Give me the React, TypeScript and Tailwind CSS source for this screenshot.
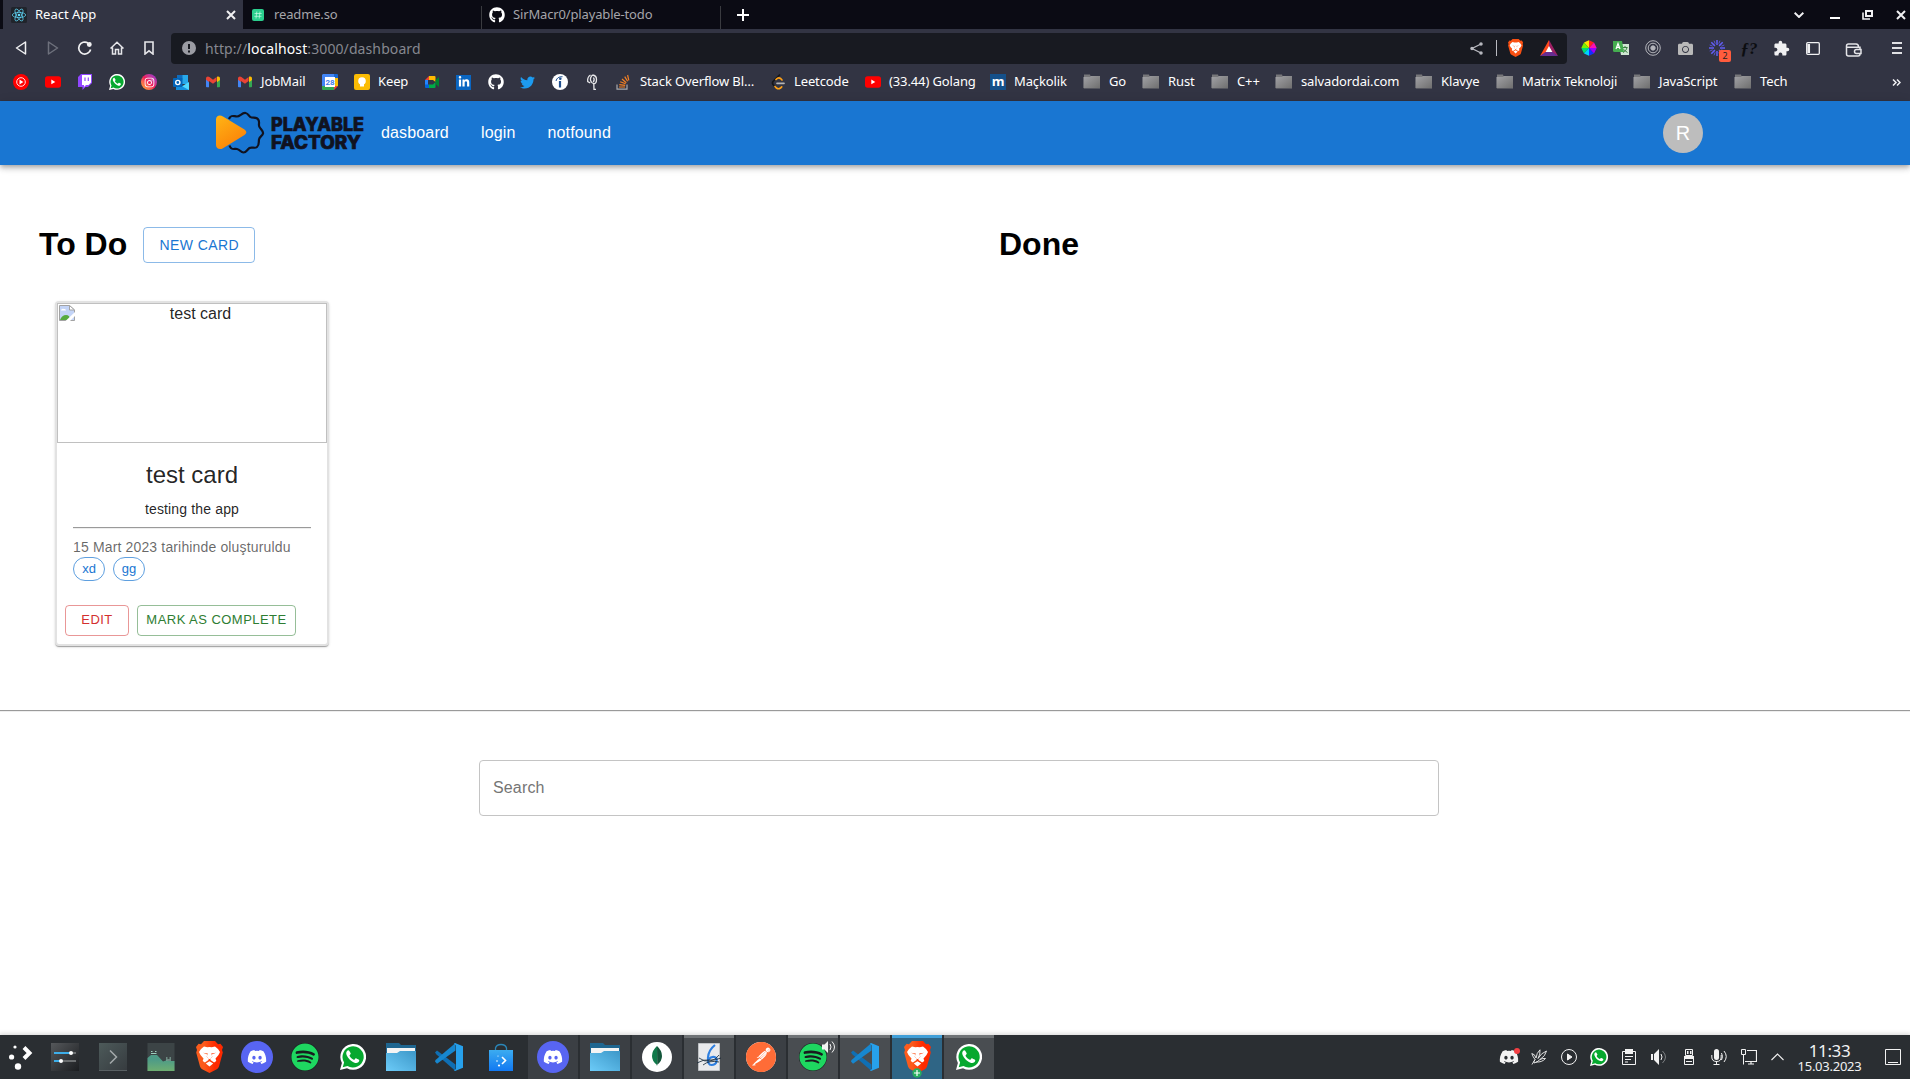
import React from "react";
import {
  FaGithub,
  FaTwitter,
  FaWhatsapp,
  FaDiscord,
  FaSpotify,
  FaInstagram,
  FaLinkedinIn,
  FaCamera,
} from "react-icons/fa";
import { MdExtension } from "react-icons/md";
import { SiPostman } from "react-icons/si";

type Size = { s?: number };

function BraveLion({ s = 32, flat = false }: { s?: number; flat?: boolean }) {
  return (
    <svg width={(s * 27) / 32} height={s} viewBox="0 0 27 32">
      <defs>
        <linearGradient id="brave-fill" x1="0" x2="1" y1="0" y2="0">
          <stop offset="0.3" stopColor="#fb5b1c" />
          <stop offset="0.7" stopColor="#ff2a00" />
        </linearGradient>
      </defs>
      <path
        d="M8 0h11l3 3.200 2.400-.4L27 6l-1 3 .8 2.600L23 25.400c-.4 1.300-1.200 2-2.200 2.800L13.500 32 6.200 28.200C5.200 27.400 4.400 26.700 4 25.400L.2 11.600 1 9 0 6l2.600-3.200 2.400.4z"
        fill={flat ? "#f95012" : "url(#brave-fill)"}
      />
      <path
        d="M8 5.500l3.300.8L13.500 6l2.200.3L19 5.500l3 2.500 2 3-1.500 3-3 3.500.8 2.500-2.200 1.500L14.500 19l-.2-1.500 2-1.800-.6-2.200 4.300-1.800-4.500.8L13.500 12l-2 .5L7 11.700l4.300 1.800-.6 2.200 2 1.800-.2 1.500-3.600 2.500L6.700 20l.8-2.500-3-3.500L3 11l2-3z"
        fill="#fff"
      />
      <path d="M12 11.500h3l1.200 4-2 2.500h-1.400l-2-2.500z" fill="#fff" />
      <path d="M13.500 20.200l3.700 2.200-3.700 3.200-3.700-3.200z" fill="#fff" />
    </svg>
  );
}

function WhatsApp({ s = 26 }: Size) {
  return (
    <svg width={s} height={s} viewBox="0 0 26 26">
      <path d="M0 26l1.900-6.900A12.900 12.900 0 1 1 7 24.200z" fill="#fff" />
      <path d="M2.700 23.300l1.400-4.800A10.600 10.600 0 1 1 7.500 21.900z" fill="#06a82f" />
      <path
        d="M9.200 6.800c-.5-1-1.500-.6-2.200.2-1.300 1.600-1 3.600.8 6.200 2 2.900 4.200 4.800 7.300 5.700 2 .6 4-.6 4.200-2.300.1-.8-.1-.9-2.900-2.200-.7-.3-1 .2-1.900 1.300-.4.500-4.600-2-5-4.200 1.800-1.800 1.200-2 .9-2.700z"
        fill="#fff"
      />
    </svg>
  );
}

function VsCode({ s = 28 }: Size) {
  return (
    <svg width={s} height={s} viewBox="0 0 28 28">
      <path d="M0 9.500l2-2L20.500 21.500V28L1.500 11.500z" fill="#0f6fb4" />
      <path d="M0 18.500l2 2.200L20.500 7.500V0L.5 17z" fill="#1787cf" />
      <path d="M20 0l8 3.200v21.600L20 28l-1-.5 2-1.500V2.500L19 .6z" fill="#27a1ec" />
    </svg>
  );
}

function DolphinFolder() {
  return (
    <svg width="30" height="28" viewBox="0 0 30 28">
      <defs>
        <linearGradient id="dolphin" x1="0" x2="1" y1="1" y2="0">
          <stop offset="0" stopColor="#6ccbf8" />
          <stop offset="1" stopColor="#3c97c8" />
        </linearGradient>
      </defs>
      <path d="M0 0h13l2 2h15v10H0z" fill="#1f6690" />
      <path d="M1 5h28v7H1z" fill="#f4f4f4" />
      <path d="M0 10h11l3-2h16v20H0z" fill="url(#dolphin)" />
    </svg>
  );
}

function DiscordDisc() {
  return (
    <span className="flex size-8 items-center justify-center rounded-full bg-[#5865f2] text-white">
      <FaDiscord size={20} />
    </span>
  );
}

function SpotifyDisc() {
  return (
    <span className="flex size-7 items-center justify-center rounded-full bg-[#191c1f] text-[#1ed760]">
      <FaSpotify size={28} />
    </span>
  );
}

function YouTube() {
  return (
    <svg width="16" height="12" viewBox="0 0 16 12">
      <rect width="16" height="11.500" y=".2" rx="2.600" fill="#f00" />
      <path d="M6.300 3.500v4.800l4-2.400z" fill="#fff" />
    </svg>
  );
}

function Gmail() {
  return (
    <svg width="16" height="12" viewBox="0 0 16 12">
      <path d="M1 2v8.500q0 .8.800.8H4V5z" fill="#4285f4" />
      <path d="M15 2v8.500q0 .8-.8.800H12V5z" fill="#34a853" />
      <path d="M1 2.500C1 .6 3-.1 4.400 1L8 3.700 11.600 1V5L8 7.800 4 5v1L1 3.800z" fill="#ea4335" />
      <path d="M12 .8C13.500-.1 15 .7 15 2.500V4l-3 2.300z" fill="#fbbc04" />
    </svg>
  );
}

function BookmarkFolder() {
  return (
    <svg width="18" height="16" viewBox="0 0 18 16">
      <defs>
        <linearGradient id="bm-folder" x1="0" x2="1" y1="0" y2="1">
          <stop offset="0" stopColor="#a2a2a6" />
          <stop offset="1" stopColor="#6f6f6f" />
        </linearGradient>
      </defs>
      <path d="M1 .5h6l.5 1.500H17v12.500H.800z" fill="#77777a" />
      <path d="M.5 3h6.500l1-1h9v12H.5z" fill="url(#bm-folder)" />
    </svg>
  );
}

function ReactLogo() {
  return (
    <svg width="16" height="16" viewBox="0 0 16 16">
      <rect width="16" height="16" rx="1.500" fill="#20242b" />
      <g fill="none" stroke="#61dafb" strokeWidth=".7">
        <ellipse cx="8" cy="8" rx="6.700" ry="2.600" />
        <ellipse cx="8" cy="8" rx="6.700" ry="2.600" transform="rotate(60 8 8)" />
        <ellipse cx="8" cy="8" rx="6.700" ry="2.600" transform="rotate(120 8 8)" />
      </g>
      <circle cx="8" cy="8" r="1.300" fill="#61dafb" />
    </svg>
  );
}

function CloseX() {
  return (
    <svg width="10" height="10" viewBox="0 0 10 10" stroke="#f0f0f2" strokeWidth="2">
      <path d="M1 1l8 8M9 1L1 9" />
    </svg>
  );
}

function TabStrip() {
  return (
    <div className="flex h-[29px] bg-[#0b0b14] pl-[3px] text-[13px] text-[#a5a5aa]">
      <div className="flex w-[240px] items-center bg-[#323443] pr-[7px] pl-2 text-white">
        <ReactLogo />
        <span className="ml-2 flex-1 whitespace-nowrap">React App</span>
        <CloseX />
      </div>
      <div className="flex w-[238px] items-center pl-[9px]">
        <svg width="12" height="12" viewBox="0 0 12 12">
          <rect width="12" height="12" rx="2" fill="#2bcf8e" />
          <path d="M4.800 2.500L4 9.500M8 2.500l-.8 7M2.500 4.500h7.200M2.300 7.300h7.200" stroke="#c9fbe6" strokeWidth=".7" />
        </svg>
        <span className="ml-[10px] tracking-[-0.15px] whitespace-nowrap">readme.so</span>
      </div>
      <div className="mt-1.5 w-px bg-[#3a3b40]" />
      <div className="flex w-[238px] items-center pl-[7px]">
        <FaGithub size={16} className="text-white" />
        <span className="ml-2 tracking-[-0.15px] whitespace-nowrap">SirMacr0/playable-todo</span>
      </div>
      <div className="mt-1.5 w-px bg-[#3a3b40]" />
      <div className="flex w-[44px] items-center justify-center">
        <svg width="12" height="12" viewBox="0 0 12 12" stroke="#fff" strokeWidth="2">
          <path d="M6 0v12M0 6h12" />
        </svg>
      </div>
      <div className="ml-auto flex items-center pr-1">
        <svg width="10" height="6" viewBox="0 0 10 6" fill="none" stroke="#f0f0f2" strokeWidth="2" className="mr-[26px]">
          <path d="M.6.800L5 5 9.400.800" />
        </svg>
        <span className="mt-[7px] mr-[22px] h-0.5 w-[10px] bg-white" />
        <svg width="11" height="10" viewBox="0 0 11 10" fill="none" stroke="#f0f0f2" strokeWidth="2" className="mr-[23px]">
          <path d="M4 1h6v5H4z" />
          <path d="M1 2.500V9h7" strokeWidth="1.600" />
        </svg>
        <CloseX />
      </div>
    </div>
  );
}

function NavCell({ children }: { children: React.ReactNode }) {
  return <span className="relative flex w-8 shrink-0 items-center justify-center pb-px">{children}</span>;
}

function Toolbar() {
  return (
    <div className="flex h-[35px] bg-[#323443] pt-1 pl-[5px]">
      <NavCell>
        <svg width="12" height="14" viewBox="0 0 12 14" fill="none" stroke="#f0f0f2" strokeWidth="1.500" strokeLinejoin="round">
          <path d="M10.500 1v12L1.500 7z" />
        </svg>
      </NavCell>
      <NavCell>
        <svg width="12" height="14" viewBox="0 0 12 14" fill="none" stroke="#6e707c" strokeWidth="1.500" strokeLinejoin="round">
          <path d="M1.500 1v12l9-6z" />
        </svg>
      </NavCell>
      <NavCell>
        <svg width="16" height="16" viewBox="0 0 16 16" fill="none" stroke="#f0f0f2" strokeWidth="1.700">
          <path d="M11 3A6 6 0 1 0 13.600 9.500" />
          <circle cx="12.300" cy="4.500" r="1.600" fill="#f0f0f2" />
        </svg>
      </NavCell>
      <NavCell>
        <svg width="14" height="14" viewBox="0 0 14 14" fill="none" stroke="#e6e6ea" strokeWidth="1.500">
          <path d="M.5 7.500L7 1.200l6.500 6.300M2.500 6.500V13H5.500V8.500h3V13h3V6.500" />
        </svg>
      </NavCell>
      <NavCell>
        <svg width="10" height="14" viewBox="0 0 10 14" fill="none" stroke="#e6e6ea" strokeWidth="1.600">
          <path d="M1 1h8v12L5 9.800 1 13z" />
        </svg>
      </NavCell>
      <div className="ml-[6px] flex h-[31px] w-[1396px] items-center rounded bg-[#181a21] pb-px pl-[11px]">
        <svg width="14" height="14" viewBox="0 0 14 14">
          <circle cx="7" cy="7" r="7" fill="#9b9ca3" />
          <path d="M7 3v5M7 9.500v2" stroke="#181a21" strokeWidth="2" />
        </svg>
        <span className="ml-[9px] flex-1 text-[14px] tracking-[0.1px] whitespace-nowrap text-[#868890]">
          http://<span className="text-white">localhost</span>:3000/dashboard
        </span>
        <svg width="13" height="13" viewBox="0 0 13 13" stroke="#b9bac0" strokeWidth="1.300" fill="#b9bac0" className="mr-[13px]">
          <path d="M11 2L2 6.500l9 4.500" fill="none" />
          <circle cx="11" cy="2" r="1.100" />
          <circle cx="2" cy="6.500" r="1.100" />
          <circle cx="11" cy="11" r="1.100" />
        </svg>
        <span className="mr-[11px] h-4 w-px bg-[#b9bac0]" />
        <BraveLion s={18} flat />
        <svg width="18" height="16" viewBox="0 0 18 16" className="mr-[9px] ml-[17px]">
          <path d="M9 0L0 16l9-5z" fill="#ff4a1c" />
          <path d="M9 0l9 16-9-5z" fill="#9e1f63" />
          <path d="M0 16h18l-5.500-4h-7z" fill="#662d91" />
          <path d="M9 6l3.400 6H5.600z" fill="#fff" />
        </svg>
      </div>
      <div className="ml-[6px] flex h-[31px]">
        <NavCell>
          <svg width="16" height="16" viewBox="0 0 16 16">
            <path d="M8 8V.3L3 2.500z" fill="#ffe100" />
            <path d="M8 8V.3l5 2.200z" fill="#ff2020" />
            <path d="M8 8L3 2.500.3 8z" fill="#7df000" />
            <path d="M8 8H.3L3 13.500z" fill="#00e070" />
            <path d="M8 8l-5 5.500 5 2.200z" fill="#00d0ff" />
            <path d="M8 8v7.700l5-2.200z" fill="#1030ff" />
            <path d="M8 8l5 5.500L15.700 8z" fill="#9a00ff" />
            <path d="M8 8h7.700L13 2.500z" fill="#ff10b0" />
          </svg>
        </NavCell>
        <NavCell>
          <svg width="16" height="16" viewBox="0 0 16 16">
            <path d="M6 4h10v11H8z" fill="#cfe6d2" />
            <path d="M9.500 7.500h5M12 6v1.500M14 7.500c-.5 2.500-2 4-4 5M10.500 9.500l4 3" stroke="#3c7f43" fill="none" />
            <path d="M0 1h9l2 11H1.500Q0 12 0 10.500z" fill="#45ad50" />
            <path d="M3 9l2-5.500L7 9M3.700 7.300h2.600" stroke="#fff" strokeWidth="1.200" fill="none" />
          </svg>
        </NavCell>
        <NavCell>
          <svg width="16" height="16" viewBox="0 0 16 16" fill="none" stroke="#b4b5bb">
            <circle cx="8" cy="8" r="7.300" />
            <circle cx="8" cy="8" r="4.800" />
            <circle cx="8" cy="8" r="2.200" fill="#b4b5bb" />
          </svg>
        </NavCell>
        <NavCell>
          <FaCamera size={15} className="text-[#b9b9b9]" />
        </NavCell>
        <NavCell>
          <svg width="16" height="16" viewBox="0 0 16 16" stroke="#625df5" strokeWidth="1.500">
            <path d="M8 0v5M8 11v5M0 8h5M11 8h5M2.300 2.300l3.600 3.600M10.100 10.100l3.600 3.600M13.700 2.300l-3.600 3.600M5.900 10.100l-3.600 3.600" />
            <path d="M5 .7l1.200 3M9.800 12.300l1.200 3M15.300 5l-3 1.200M3.700 9.800l-3 1.200M11 .7l-1.200 3M6.200 12.300l-1.200 3M.7 5l3 1.200M12.300 9.800l3 1.200" strokeWidth=".8" />
          </svg>
          <span className="absolute top-[17px] left-[18px] flex h-3 w-3 items-center justify-center rounded-[2px] bg-[#ff5c3d] text-[9px] text-[#222]">
            2
          </span>
        </NavCell>
        <NavCell>
          <span className="font-[Liberation_Serif] text-[17px] leading-none font-bold text-[#0c0d11] italic">ƒ?</span>
        </NavCell>
        <NavCell>
          <MdExtension size={17} className="text-[#f0f0f2]" />
        </NavCell>
        <NavCell>
          <svg width="14" height="13" viewBox="0 0 14 13" fill="none" stroke="#f0f0f2" strokeWidth="1.300">
            <rect x=".7" y=".7" width="12.600" height="11.600" rx="1" />
            <path d="M2.700 2v9" strokeWidth="2.700" />
          </svg>
        </NavCell>
        <span className="flex w-12 items-center justify-center">
          <svg width="17" height="14" viewBox="0 0 17 14" fill="none" stroke="#e4e4e8" strokeWidth="1.500" className="mt-0.5">
            <path d="M15 6.500V4.200H1.500V11q0 2 2 2H13q2 0 2-2v-.5M1.500 5V3q0-2 2-2H11q2.500 0 2.500 3" />
            <path d="M16 6.500h-4.500q-2 0-2 2t2 2H16z" />
          </svg>
        </span>
        <span className="ml-[15px] flex flex-col justify-center gap-[3px] pb-px">
          <span className="h-0.5 w-[10px] bg-[#e0e0e4]" />
          <span className="h-0.5 w-[10px] bg-[#e0e0e4]" />
          <span className="h-0.5 w-[10px] bg-[#e0e0e4]" />
        </span>
      </div>
    </div>
  );
}

type Mark = { icon: React.ReactNode; label?: string; width?: string };

const marks: Mark[] = [
  {
    icon: (
      <svg width="16" height="16" viewBox="0 0 16 16">
        <circle cx="8" cy="8" r="8" fill="#f00" />
        <circle cx="8" cy="8" r="4.300" fill="none" stroke="#fff" strokeWidth=".9" />
        <path d="M6.500 5.600v4.800L10.400 8z" fill="#fff" />
      </svg>
    ),
  },
  { icon: <YouTube /> },
  {
    icon: (
      <svg width="16" height="16" viewBox="0 0 16 16">
        <path d="M4 0h11v9l-4 4H8.500L5.500 16v-3H1V3z" fill="#9146ff" />
        <path d="M5 1h9v7.500L11.500 11H9l-2 2v-2H5z" fill="#fff" />
        <path d="M8 3.500v3.500M11.300 3.500v3.500" stroke="#9146ff" strokeWidth="1.200" />
      </svg>
    ),
  },
  { icon: <WhatsApp s={16} /> },
  {
    icon: (
      <span className="flex size-4 items-center justify-center rounded-full bg-linear-to-tr from-[#ffb400] via-[#f0185c] to-[#8a1be0] text-white">
        <FaInstagram size={11} />
      </span>
    ),
  },
  {
    icon: (
      <svg width="16" height="16" viewBox="0 0 16 16">
        <path d="M4 1h11v9H4z" fill="#28a8ea" />
        <path d="M4 1h5.500v4.500H4z" fill="#0f6cbd" />
        <path d="M3 8l6.500 4L16 8v8H3z" fill="#50d9ff" />
        <path d="M3 9l13 7H3z" fill="#1490df" />
        <rect y="4" width="9.500" height="9" rx="1" fill="#0364b8" />
        <circle cx="4.800" cy="8.500" r="2.100" fill="none" stroke="#fff" strokeWidth="1.400" />
      </svg>
    ),
  },
  { icon: <Gmail /> },
  { icon: <Gmail />, label: "JobMail", width: "w-[45px]" },
  {
    icon: (
      <svg width="16" height="16" viewBox="0 0 16 16">
        <path d="M1 0h11v4H0V1z" fill="#4285f4" />
        <path d="M0 3h4v9H0z" fill="#4285f4" />
        <path d="M12 0h3q1 0 1 1v3h-4z" fill="#1967d2" />
        <path d="M12 4h4v8h-4z" fill="#fbbc04" />
        <path d="M0 12h12v4H1q-1 0-1-1z" fill="#34a853" />
        <path d="M12 12h4l-4 4z" fill="#ea4335" />
        <path d="M3 3h10v10H3z" fill="#fff" />
        <text x="8" y="11" fontSize="8" fontWeight="700" textAnchor="middle" fill="#3f7de8" fontFamily="Roboto, sans-serif">
          28
        </text>
      </svg>
    ),
  },
  {
    icon: (
      <svg width="16" height="16" viewBox="0 0 16 16">
        <rect width="16" height="16" rx="2" fill="#fbbc04" />
        <circle cx="8" cy="7" r="3.800" fill="#fff" />
        <path d="M6 9h4v3.500H6z" fill="#fff" />
      </svg>
    ),
    label: "Keep",
    width: "w-[30px]",
  },
  {
    icon: (
      <svg width="16" height="16" viewBox="0 0 16 16">
        <path d="M1 6l4-4v4z" fill="#ea4335" />
        <path d="M1 6h3v5H1z" fill="#2684fc" />
        <path d="M1 10.500h4V14H2q-1 0-1-1z" fill="#0066da" />
        <path d="M5 2h5.500q1 0 1 1v5L9 6H5z" fill="#ffba00" />
        <path d="M5 10.500h4L11.500 8v5q0 1-1 1H5z" fill="#00ac47" />
        <path d="M11.500 6L15 3v10l-3.500-3z" fill="#00832d" />
      </svg>
    ),
  },
  {
    icon: (
      <span className="mr-px flex size-[15px] items-center justify-center bg-[#0a66c2] text-white">
        <FaLinkedinIn size={12} />
      </span>
    ),
  },
  { icon: <FaGithub size={16} className="text-white" /> },
  { icon: <FaTwitter size={15} className="mr-px text-[#1d9bf0]" /> },
  {
    icon: (
      <svg width="16" height="16" viewBox="0 0 16 16">
        <circle cx="8" cy="8" r="8" fill="#fff" />
        <path d="M8 7v6.500" stroke="#1f4f8f" strokeWidth="2.200" />
        <circle cx="8.300" cy="4.800" r="1.300" fill="#1f4f8f" />
        <path d="M4 7Q5 2.500 10.500 2.700" fill="none" stroke="#1f4f8f" />
      </svg>
    ),
  },
  {
    icon: (
      <svg width="16" height="16" viewBox="0 0 16 16" fill="none" stroke="#e8e8ea" strokeWidth="1.300">
        <path d="M6.500 1Q3.200 3 3.700 7.500L6.300 9M8.500 1Q5.500 4 6.800 7T10.500 9.500M8.500 1Q12.500 1.500 12.500 5.500T9.800 10L10 15.300h2M9.500 3.500q1.500 2.500-.3 4.500" />
      </svg>
    ),
  },
  {
    icon: (
      <svg width="16" height="16" viewBox="0 0 16 16" fill="none">
        <path d="M1 10.500v4.700h10v-4.700" stroke="#a9aaae" strokeWidth="1.200" />
        <path d="M3 13h6M3.300 10.600l5.900.8M4.200 7.800l5.400 2M6 5l4.300 3.700M8.700 2.600l2.900 4.700M11.600 1l1.200 5.300" stroke="#f48024" strokeWidth="1.200" />
      </svg>
    ),
    label: "Stack Overflow Bl…",
    width: "w-[114px]",
  },
  {
    icon: (
      <svg width="16" height="16" viewBox="0 0 16 16" fill="none" strokeWidth="1.700" strokeLinecap="round">
        <path d="M9.500 1L3 7.500Q2 9 3 10.500L5 12.500" stroke="#15161a" />
        <path d="M5 12.500L6.500 14Q8.500 15.500 10.500 14L11.700 12.800M6 5.500Q8.500 2.800 10.500 4.500L12 6" stroke="#ffa116" />
        <path d="M7 9.300h7" stroke="#b3b3b3" />
      </svg>
    ),
    label: "Leetcode",
    width: "w-[55px]",
  },
  { icon: <YouTube />, label: "(33.44) Golang", width: "w-[85px]" },
  {
    icon: (
      <span className="flex size-4 items-center justify-center bg-[#14508a] pb-0.5 font-[Open_Sans] text-[13px] leading-none font-bold text-white">
        m
      </span>
    ),
    label: "Maçkolik",
    width: "w-[53px]",
  },
  { icon: <BookmarkFolder />, label: "Go", width: "w-[17px]" },
  { icon: <BookmarkFolder />, label: "Rust", width: "w-[27px]" },
  { icon: <BookmarkFolder />, label: "C++", width: "w-[22px]" },
  { icon: <BookmarkFolder />, label: "salvadordai.com", width: "w-[98px]" },
  { icon: <BookmarkFolder />, label: "Klavye", width: "w-[39px]" },
  { icon: <BookmarkFolder />, label: "Matrix Teknoloji", width: "w-[95px]" },
  { icon: <BookmarkFolder />, label: "JavaScript", width: "w-[59px]" },
  { icon: <BookmarkFolder />, label: "Tech", width: "w-[27px]" },
];

function BookmarksBar() {
  return (
    <div className="flex h-[37px] items-center gap-4 bg-[#323443] pr-[9px] pb-px pl-[13px] text-[13px] tracking-[-0.12px] text-white">
      {marks.map((m, i) => (
        <span key={i} className="flex h-5 shrink-0 items-center gap-2">
          {m.icon}
          {m.label && <span className={`${m.width} whitespace-nowrap`}>{m.label}</span>}
        </span>
      ))}
      <svg width="9" height="7" viewBox="0 0 9 7" fill="none" stroke="#f0f0f2" strokeWidth="1.500" className="ml-auto">
        <path d="M1 .5l3 3-3 3M5 .5l3 3-3 3" />
      </svg>
    </div>
  );
}

function PlayableLogo() {
  return (
    <svg width="150" height="44" viewBox="0 0 150 44">
      <defs>
        <linearGradient id="play" x1="0" x2=".6" y1="0" y2="1">
          <stop offset="0" stopColor="#ffb515" />
          <stop offset="1" stopColor="#fb8208" />
        </linearGradient>
      </defs>
      <path
        d="M13 8C15 3 18 5.500 21 5.500S26 1.500 29.500 2s3 4 6 4.500 5.500-.5 7 2.500-.5 4.500 1 7 4 4 3.500 6.500-3.500 3-4 6 .5 5.500-2 7.500-5-.5-7.500 1-3 4.500-6 4.500-3.500-3-6.500-3.500-6 1.500-7.500-3.500"
        fill="none"
        stroke="#10121f"
        strokeWidth="2.200"
      />
      <path
        d="M0 8.500C0 4.500 4 3.500 7 5.500L28.500 18.500C31 20.500 31 22 28.500 24L7 37.200C4 39 0 38 0 34z"
        fill="url(#play)"
      />
      <g fill="#10121f" stroke="#10121f" strokeWidth=".7" fontFamily="Inter, sans-serif" fontWeight="800" fontSize="18.300">
        <text x="55" y="19.900" textLength="93" lengthAdjust="spacingAndGlyphs">
          PLAYABLE
        </text>
        <text x="55" y="37.700" textLength="90" lengthAdjust="spacingAndGlyphs">
          FACTORY
        </text>
      </g>
    </svg>
  );
}

function AppBar() {
  return (
    <header className="relative flex h-16 items-center bg-[#1976d2] pr-[207px] pl-[216px] text-base text-white shadow-[0_2px_4px_-1px_rgba(0,0,0,0.2),0_4px_5px_0_rgba(0,0,0,0.14),0_1px_10px_0_rgba(0,0,0,0.12)]">
      <PlayableLogo />
      <nav className="ml-[15px] flex gap-8 tracking-[0.15px]">
        <a>dasboard</a>
        <a>login</a>
        <a>notfound</a>
      </nav>
      <span className="ml-auto flex size-10 items-center justify-center rounded-full bg-[#bdbdbd] text-xl leading-none">R</span>
    </header>
  );
}

function BrokenImage() {
  return (
    <svg width="16" height="16" viewBox="0 0 16 16">
      <path d="M.5.500h10L15.500 5v10.500H.5z" fill="#c3d4f7" stroke="#a3a3a3" />
      <path d="M10.500.5V5h5z" fill="#fff" stroke="#a3a3a3" />
      <path d="M2 5q1.500-2 3-1 2-.5 2 1.500H2z" fill="#fff" />
      <path d="M1 15q2-5 6-5t4 5z" fill="#57ab40" />
      <path d="M6.500 16L16 7v4l-5 5z" fill="#fff" />
    </svg>
  );
}

function TodoCard() {
  return (
    <article className="w-[274px] rounded border-2 border-[#e2e2e2] bg-white text-black/87 shadow-[0_2px_1px_-1px_rgba(0,0,0,0.2),0_1px_1px_0_rgba(0,0,0,0.14),0_1px_3px_0_rgba(0,0,0,0.12)]">
      <div className="flex h-[140px] items-start border border-[#c0c0c0] pt-px pl-px">
        <BrokenImage />
        <span className="-mt-px flex-1 text-center text-base leading-[19px]">test card</span>
      </div>
      <div className="px-4 pt-4 pb-4">
        <h5 className="text-center text-2xl leading-8">test card</h5>
        <p className="mt-2 text-center text-sm tracking-[0.15px]">testing the app</p>
        <hr className="my-2 h-0.5 border-t border-b border-t-[#9a9a9a] border-b-[#eeeeee]" />
        <p className="text-sm tracking-[0.15px] text-black/60">15 Mart 2023 tarihinde oluşturuldu</p>
        <div className="flex gap-2 text-[13px] text-[#1976d2]">
          <span className="flex h-6 w-8 items-center justify-center rounded-full border border-[#1976d2]/70">xd</span>
          <span className="flex h-6 w-8 items-center justify-center rounded-full border border-[#1976d2]/70">gg</span>
        </div>
      </div>
      <div className="flex gap-2 p-2 text-[13px] tracking-[0.46px]">
        <button className="h-[31px] w-16 rounded border border-[#d32f2f]/50 pb-0.5 text-[#d32f2f]">EDIT</button>
        <button className="h-[31px] w-[159px] rounded border border-[#2e7d32]/50 pb-0.5 whitespace-nowrap text-[#2e7d32]">
          MARK AS COMPLETE
        </button>
      </div>
    </article>
  );
}

function Dashboard() {
  return (
    <main className="h-[870px] overflow-hidden bg-white">
      <div className="grid h-[545px] grid-cols-[960px_1fr] pt-[60px] pl-[39px]">
        <section>
          <div className="flex h-10 items-center gap-4">
            <h1 className="pb-0.5 text-[32px] leading-[38px] font-bold text-black">To Do</h1>
            <button className="h-9 w-28 rounded border border-[#1976d2]/50 text-sm tracking-[0.4px] text-[#1976d2]">NEW CARD</button>
          </div>
          <div className="mt-9 ml-4">
            <TodoCard />
          </div>
        </section>
        <section>
          <h1 className="text-[32px] leading-[38px] font-bold text-black">Done</h1>
        </section>
      </div>
      <hr className="h-0.5 border-t border-b border-t-[#9a9a9a] border-b-[#eeeeee]" />
      <div className="mt-12 ml-[479px] flex h-14 w-[960px] items-center rounded border border-[#c4c4c4] px-[13px] text-base tracking-[0.15px] text-[#757575]">
        Search
      </div>
    </main>
  );
}

function Launcher({ children }: { children: React.ReactNode }) {
  return <span className="flex w-12 shrink-0 items-center justify-center">{children}</span>;
}

const taskTone = {
  idle: "border-[#3b3f44] bg-[#3b3f44]",
  open: "border-[#6f7376] bg-[#494d51]",
  active: "border-[#419fd8] bg-[#2f6585]",
};

function Task({ tone, children }: { tone: keyof typeof taskTone; children: React.ReactNode }) {
  return (
    <span className={`relative flex w-[50px] items-center justify-center border-t-[3px] pb-[3px] ${taskTone[tone]}`}>
      {children}
    </span>
  );
}

function Tray() {
  const cell = "flex w-[30px] items-center justify-center";
  return (
    <div className="ml-auto flex text-[#f2f2f2]">
      <span className={`relative ${cell}`}>
        <FaDiscord size={20} />
        <span className="absolute top-[13px] right-1 size-1.5 rounded-full bg-[#f23f43]" />
      </span>
      <span className={cell}>
        <svg width="16" height="16" viewBox="0 0 16 16" fill="none" stroke="currentColor" strokeWidth=".9">
          <path d="M1 15.500l3-5M4 10.500Q2 8 .8 4.500 4 5 5 9 5.500 4 9 .8 9.500 5 7 9.500 10 4 15.500 2 14.500 7 9 10.500 12 9 14.500 9.500 11 13.500 5 13M4 10.500q-1.500 2-1 3.500 3-.5 6-3.500" />
        </svg>
      </span>
      <span className={cell}>
        <svg width="16" height="16" viewBox="0 0 16 16" fill="none" stroke="currentColor">
          <circle cx="8" cy="8" r="7.500" />
          <path d="M6.500 5v6L11 8z" fill="currentColor" />
        </svg>
      </span>
      <span className={cell}>
        <WhatsApp s={18} />
      </span>
      <span className={cell}>
        <svg width="14" height="16" viewBox="0 0 14 16" fill="none" stroke="currentColor">
          <path d="M.5 2.500h13v13H.5zM3 7.500h8M3 10.500h6M3 13h3" />
          <path d="M3 0h8v5H3z" fill="currentColor" stroke="none" />
        </svg>
      </span>
      <span className={cell}>
        <svg width="16" height="16" viewBox="0 0 16 16" fill="none" stroke="currentColor">
          <path d="M0 5h2v6H0zM3 5l5-5v16l-5-5z" fill="currentColor" stroke="none" />
          <path d="M10 5q2 3 0 6" />
          <path d="M11.500 2q6 6 0 12" stroke="#7b7e81" />
        </svg>
      </span>
      <span className={cell}>
        <svg width="12" height="16" viewBox="0 0 12 16" fill="none" stroke="currentColor">
          <path d="M2.500.5h7v6h-7zM1.500 7.500h9v8h-9z" />
          <path d="M1 7h10v3H1zM4 2h1.500v3H4zM7 2h1.500v3H7zM3 12h6v1H3z" fill="currentColor" stroke="none" />
        </svg>
      </span>
      <span className={cell}>
        <svg width="16" height="16" viewBox="0 0 16 16" fill="none" stroke="currentColor">
          <rect x="3" y="0" width="5" height="11" rx="2.500" fill="currentColor" stroke="none" />
          <path d="M.800 6v2q0 4.500 4.700 4.500T10.200 8V6M5.500 12v3.500M2.500 15.500h6M10.500 4q2 3.500 0 7M13 2q4.500 5.500 0 11" />
        </svg>
      </span>
      <span className={cell}>
        <svg width="16" height="16" viewBox="0 0 16 16" fill="none" stroke="currentColor">
          <path d="M6 1.500h9.500v11H4M7 15h6M10 12v3" strokeWidth="1.200" />
          <path d="M.5.500h4v5h-4zM2.500 6v9.500" />
        </svg>
      </span>
      <span className="flex w-[26px] items-center justify-center">
        <svg width="13" height="8" viewBox="0 0 13 8" fill="none" stroke="currentColor" strokeWidth="1.100">
          <path d="M.5 7l6-6 6 6" />
        </svg>
      </span>
      <div className="flex w-[79px] flex-col items-center pt-[5px]">
        <span className="text-[17px] leading-[22px] tracking-[-0.4px]">11:33</span>
        <span className="text-[13px] leading-[8px] tracking-[-0.25px] whitespace-nowrap">15.03.2023</span>
      </div>
      <span className="flex w-[41px] items-center justify-end pr-[9px]">
        <svg width="16" height="16" viewBox="0 0 16 16" fill="none" stroke="currentColor">
          <path d="M.5.500h15v15H.5zM3 13.500h10" />
        </svg>
      </span>
    </div>
  );
}

function Taskbar() {
  return (
    <footer className="relative flex h-11 bg-[#2a2e32] shadow-[0_0_5px_1px_rgba(0,0,0,0.18)]">
      <span className="flex w-[41px] items-center justify-center">
        <svg width="24" height="26" viewBox="0 0 24 26" fill="#fff">
          <circle cx="6" cy="3" r="1.600" />
          <circle cx="2.600" cy="13" r="2.600" />
          <circle cx="9" cy="22.500" r="3.200" />
          <path d="M15 3.500L20.500 9 15 14.500" fill="none" stroke="#fff" strokeWidth="4" />
        </svg>
      </span>
      <Launcher>
        <svg width="28" height="28" viewBox="0 0 28 28">
          <defs>
            <linearGradient id="panel-tile" x1="0" x2="1" y1="0" y2="1">
              <stop offset="0" stopColor="#55585b" />
              <stop offset="1" stopColor="#1b1d20" />
            </linearGradient>
          </defs>
          <path d="M0 0h28v28H0z" fill="url(#panel-tile)" />
          <path d="M3 10h18M3 18h7" stroke="#3daee9" strokeWidth="2" />
          <path d="M20 10h5M10 18h15" stroke="#6b6e70" strokeWidth="2" />
          <circle cx="20" cy="10" r="2" fill="#fff" />
          <circle cx="10" cy="18" r="2" fill="#fff" />
        </svg>
      </Launcher>
      <Launcher>
        <svg width="28" height="28" viewBox="0 0 28 28">
          <defs>
            <linearGradient id="konsole" x1="0" x2="1" y1="0" y2="1">
              <stop offset="0" stopColor="#4d5a5a" />
              <stop offset="1" stopColor="#363b3f" />
            </linearGradient>
          </defs>
          <path d="M0 0h28v28H0z" fill="url(#konsole)" />
          <path d="M0 27.500h28" stroke="#596063" />
          <path d="M11 7.500l6.500 6.500-6.500 6.500" fill="none" stroke="#a3a9aa" strokeWidth="1.500" />
        </svg>
      </Launcher>
      <Launcher>
        <svg width="28" height="28" viewBox="0 0 28 28">
          <defs>
            <linearGradient id="monitor" x1="0" x2="0" y1="0" y2="1">
              <stop offset=".3" stopColor="#4e9b87" />
              <stop offset="1" stopColor="#6eae71" />
            </linearGradient>
          </defs>
          <path d="M.5 0h27v28H.5z" fill="#3c4446" />
          <path d="M.5 15L4 12h6l6 6.500 3-1 3 .5 5.500 0v10H.5z" fill="url(#monitor)" />
          <path d="M4 8.500h1.500M8 8.500h1.500M4 10.500h5.500M19 15h1.500M22.500 15h1.500M19 17h5" stroke="#9ccfbd" strokeWidth="1.200" />
        </svg>
      </Launcher>
      <Launcher>
        <BraveLion />
      </Launcher>
      <Launcher>
        <DiscordDisc />
      </Launcher>
      <Launcher>
        <SpotifyDisc />
      </Launcher>
      <Launcher>
        <WhatsApp />
      </Launcher>
      <Launcher>
        <DolphinFolder />
      </Launcher>
      <Launcher>
        <VsCode />
      </Launcher>
      <span className="flex w-[55px] items-center justify-center">
        <svg width="24" height="28" viewBox="0 0 24 28">
          <defs>
            <linearGradient id="bag" x1="0" x2="0" y1="0" y2="1">
              <stop offset="0" stopColor="#3cacf0" />
              <stop offset="1" stopColor="#1178f2" />
            </linearGradient>
          </defs>
          <path d="M6.500 7V5q1-3.500 5.500-3.500T17.500 5v2" fill="none" stroke="#2a86b8" strokeWidth="1.300" />
          <path d="M0 7h24v21H0z" fill="url(#bag)" />
          <path d="M13 14l3.500 3.500L13 21" fill="none" stroke="#fff" strokeWidth="1.600" />
          <circle cx="9" cy="13" r=".6" fill="#fff" />
          <circle cx="8" cy="18" r=".8" fill="#fff" />
          <circle cx="10" cy="22.500" r="1.100" fill="#fff" />
        </svg>
      </span>
      <div className="flex gap-0.5">
        <Task tone="idle">
          <DiscordDisc />
        </Task>
        <Task tone="idle">
          <DolphinFolder />
        </Task>
        <Task tone="idle">
          <span className="flex size-[30px] items-center justify-center rounded-full bg-white">
            <svg width="12" height="22" viewBox="0 0 12 22">
              <path d="M6 0q5 4.500 5 10 0 5-4.500 8.500L6.200 20z" fill="#13563a" />
              <path d="M6 0Q1 4.500 1 10q0 5 4.500 8.500L6 20z" fill="#10794a" />
            </svg>
          </span>
        </Task>
        <Task tone="open">
          <svg width="24" height="28" viewBox="0 0 24 28" fill="none">
            <path d="M1.500.5h21v27h-21z" fill="#e9eaec" stroke="#bfc2c5" />
            <path d="M18 2Q11.500 7 11 14.500T14.500 22t5-3.500-2-4.500-6 2.500" stroke="#2e7fe0" strokeWidth="2.200" />
            <path d="M0 20q7-4 12-3t12-2M2 15q5 4 11 3t9-6M6 22q6-5 16-3" stroke="#122433" strokeWidth=".8" />
          </svg>
        </Task>
        <Task tone="idle">
          <span className="flex size-[30px] items-center justify-center rounded-full bg-white text-[#ff6c37]">
            <SiPostman size={30} />
          </span>
        </Task>
        <Task tone="open">
          <SpotifyDisc />
          <svg width="14" height="14" viewBox="0 0 14 14" fill="none" stroke="#f2f2f2" className="absolute top-0.5 right-0.5">
            <path d="M0 4.500h2.500L6 1v12L2.500 9.500H0z" fill="#f2f2f2" stroke="none" />
            <path d="M8 4q2 3 0 6M10 1.500q5 5.500 0 11" />
          </svg>
        </Task>
        <Task tone="open">
          <VsCode />
        </Task>
        <Task tone="active">
          <BraveLion />
          <svg width="10" height="10" viewBox="0 0 10 10" className="absolute bottom-px left-5">
            <circle cx="5" cy="5" r="4.700" fill="#27ae60" />
            <path d="M5 2v6M2 5h6" stroke="#fff" strokeWidth="1.200" />
          </svg>
        </Task>
        <Task tone="open">
          <WhatsApp />
        </Task>
      </div>
      <Tray />
    </footer>
  );
}

export default function App() {
  return (
    <div className="flex h-[1079px] w-[1910px] flex-col overflow-hidden bg-white">
      <div className="font-['Noto_Sans',sans-serif]">
        <TabStrip />
        <Toolbar />
        <BookmarksBar />
      </div>
      <div className="font-['Liberation_Sans',Arial,sans-serif]">
        <AppBar />
        <Dashboard />
      </div>
      <div className="font-['Noto_Sans',sans-serif]">
        <Taskbar />
      </div>
    </div>
  );
}
